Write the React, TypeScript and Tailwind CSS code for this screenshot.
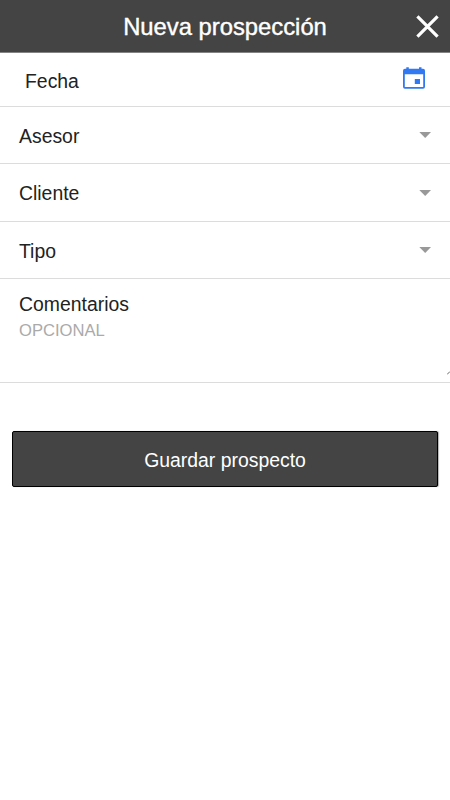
import React from "react";

function SelectRow({ label, height }: { label: string; height: string }) {
  return (
    <button
      type="button"
      className={`flex w-full items-center justify-between border-b border-[#dcdcdc] pl-[19px] pr-[19px] text-left ${height}`}
    >
      <span className="pt-px leading-6">{label}</span>
      <svg width="12" height="6" viewBox="0 0 12 6" fill="#999999">
        <path d="M0.3 0H12L6.2 6Z" />
      </svg>
    </button>
  );
}

export default function App() {
  return (
    <main className="flex h-[800px] w-[450px] flex-col overflow-hidden bg-white font-['Liberation_Sans',Arial,sans-serif] text-[19.4px] text-[#222222]">
      <header className="grid h-[53px] shrink-0 grid-cols-[46px_1fr_46px] items-center border-b border-[#848484] bg-[#444444] text-white">
        <h1 className="col-start-2 pt-0.5 text-center text-[23.8px] leading-7 [-webkit-text-stroke:0.4px_white]">
          Nueva prospección
        </h1>
        <button type="button" aria-label="Cerrar" className="pl-3">
          <svg width="23" height="23" viewBox="0 0 23 23" fill="none" stroke="white" strokeWidth="3.2">
            <path d="M1.4 1.4L21.6 21.6M21.6 1.4L1.4 21.6" />
          </svg>
        </button>
      </header>

      <div className="flex h-[54px] shrink-0 items-center justify-between border-b border-[#dcdcdc] pl-[25px] pr-[25px]">
        <span className="pt-[3px] leading-6">Fecha</span>
        <svg width="22" height="22" viewBox="0 0 22 22" className="mb-1">
          <path
            fill="#3079f3"
            fillRule="evenodd"
            d="M3.3 0.3H5.8V1.8H16V0.3H18.5V1.8H20Q22 1.8 22 3.8V19.8Q22 21.8 20 21.8H2Q0 21.8 0 19.8V3.8Q0 1.8 2 1.8H3.3ZM1.8 7.2V20.1H20.2V7.2ZM11.8 12H17V17H11.8Z"
          />
        </svg>
      </div>

      <SelectRow label="Asesor" height="h-[57px] shrink-0" />
      <SelectRow label="Cliente" height="h-[58px] shrink-0" />
      <SelectRow label="Tipo" height="h-[57px] shrink-0" />

      <label className="flex h-[104px] shrink-0 flex-col border-b border-[#dcdcdc] pl-[19px] pt-[13px]">
        <span className="leading-6">Comentarios</span>
        <span className="flex h-[59px] items-start justify-between pt-[3px]">
          <textarea
            placeholder="OPCIONAL"
            className="h-[54px] w-[400px] resize-none text-[16.6px] leading-6 outline-none placeholder:text-[#aaaaaa]"
          />
          <svg width="3" height="4" viewBox="0 0 3 4" className="self-end" stroke="#666666">
            <path d="M0 3.5L3 0.5" />
          </svg>
        </span>
      </label>

      <button
        type="button"
        className="mx-3 mt-12 flex h-[56px] w-[426px] shrink-0 items-center justify-center rounded-[2px] border border-black bg-[#444444] pt-[3px] text-white shadow-[1px_0_1px_rgba(0,0,0,0.3)]"
      >
        Guardar prospecto
      </button>
    </main>
  );
}
